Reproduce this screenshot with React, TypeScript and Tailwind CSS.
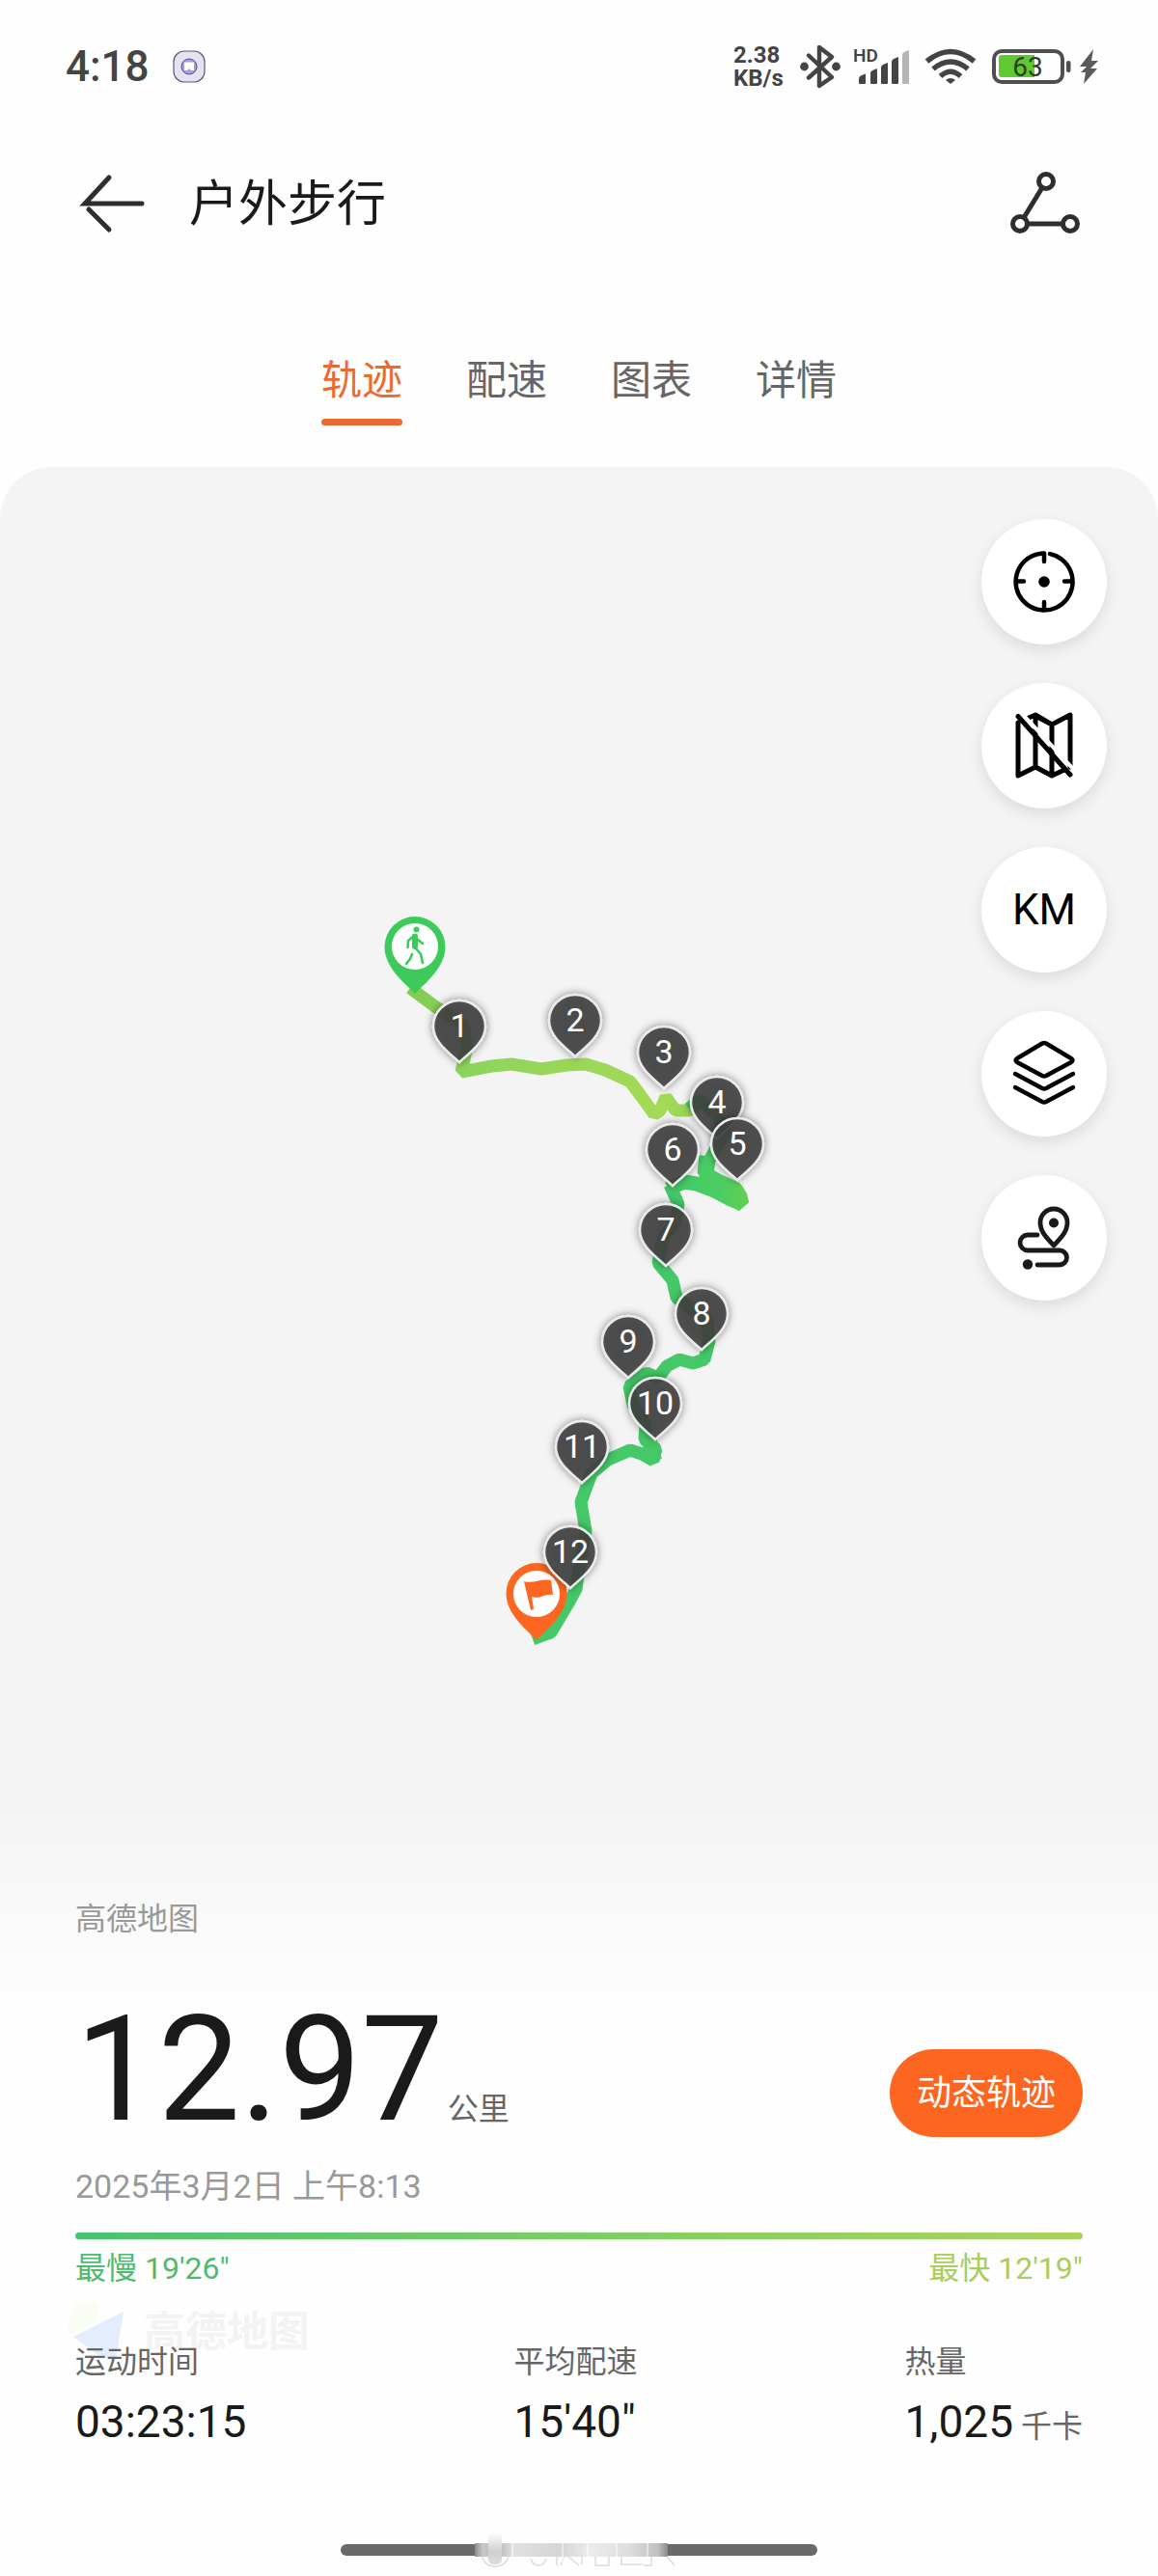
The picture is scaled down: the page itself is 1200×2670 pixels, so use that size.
import React from 'react';

const TABS = ['轨迹', '配速', '图表', '详情'];

// Pins are listed in drawing order, x/y is the tip of the pin
const KM_PINS = [
  { km: 1, x: 476, y: 1101 },
  { km: 2, x: 596, y: 1095 },
  { km: 3, x: 688, y: 1128 },
  { km: 4, x: 743, y: 1180 },
  { km: 5, x: 764, y: 1223 },
  { km: 6, x: 697, y: 1229 },
  { km: 7, x: 690, y: 1312 },
  { km: 8, x: 727, y: 1399 },
  { km: 9, x: 651, y: 1428 },
  { km: 10, x: 679, y: 1492 },
  { km: 11, x: 603, y: 1537 },
  { km: 12, x: 591, y: 1646 },
];

const StatusBar: React.FC = () => {
  return (
    <div className="flex items-center justify-between h-[138px] pl-[68px] pr-[60px] text-[#444]">
      <div className="flex items-center gap-6">
        <span className="text-[44px] leading-[48px] font-medium">4:18</span>
        <svg className="w-[34px] h-[34px]" viewBox="0 0 34 34">
          <rect x="1" y="1" width="32" height="32" rx="11" fill="#e6e2f0" stroke="#5d5578" strokeWidth="1.2" />
          <circle cx="17" cy="17" r="8" fill="#a99be0" stroke="#5b4a9c" strokeWidth="1" />
          <path d="M12 12.500h10v8.500h-3l-2-2-2 2h-3z" fill="#fff" />
        </svg>
      </div>

      <div className="flex items-center">
        <div className="w-[60px] mr-[9px] text-[24px] leading-[24px] font-bold">
          <div>2.38</div>
          <div>KB/s</div>
        </div>
        <svg className="w-[42px] h-[46px] mr-[13px]" viewBox="0 0 42 46" fill="none" stroke="currentColor" strokeWidth="4.4" strokeLinejoin="round" strokeLinecap="round">
          <path d="M9 11.5 33 34 20 43V3L33 13 9 34.500" />
          <circle cx="4.500" cy="23" r="2.200" />
          <circle cx="37.500" cy="23" r="2.200" />
        </svg>
        <svg className="w-[60px] h-[52px] mr-[14px]" viewBox="0 -6 60 52">
          <text x="0" y="15" fontSize="19" fontWeight="600" fill="currentColor">HD</text>
          <g fill="currentColor">
            <path d="M6 33q0-3 3-4l4-1.500V37q0 1-1 1H7q-1 0-1-1z" />
            <path d="M18 27q0-2 2-3l5-2v15q0 1-1 1h-5q-1 0-1-1z" />
            <path d="M29 21q0-2 2-3l5-2v21q0 1-1 1h-5q-1 0-1-1z" />
            <path d="M40 15q0-2 2-3l5-2v27q0 1-1 1h-5q-1 0-1-1z" />
          </g>
          <path d="M51 8q0-2 2-3l5-2v34q0 1-1 1h-5q-1 0-1-1z" fill="#b5b5b5" />
        </svg>
        <svg className="w-[54px] h-[40px] mr-4" viewBox="0 0 54 40" fill="none" stroke="currentColor" strokeWidth="5.500">
          <path d="M2.500 14.500Q27-5.500 51.500 14.500" />
          <path d="M9 22.500Q27 7.500 45 22.500" />
          <path d="M16.500 30Q27 20.500 37.500 30" />
          <path d="M22 34q5-4 10 0l-5 4z" fill="currentColor" stroke="none" />
        </svg>
        <svg className="w-[82px] h-[36px] mr-2" viewBox="0 0 82 36">
          <rect x="2" y="2" width="71" height="32" rx="8" fill="none" stroke="#4f4f4f" strokeWidth="4" />
          <path d="M10 6h34v23H10q-3 0-3-3V9q0-3 3-3z" fill="#60c831" />
          <rect x="77" y="12" width="4.500" height="12" rx="2" fill="#4f4f4f" />
          <text x="37" y="28" textAnchor="middle" fontSize="28" fill="#2d4022">63</text>
        </svg>
        <svg className="w-[22px] h-[38px]" viewBox="0 0 22 38">
          <path d="M15 1 1 19h7L2 25h5L5 37 19 21h-7l8-8h-7z" fill="#5a5a5a" />
        </svg>
      </div>
    </div>
  );
};

const Header: React.FC = () => {
  return (
    <header className="flex items-center h-[148px] pl-[82px] pr-20 text-[#2e2e2e]">
      <button type="button" aria-label="返回">
        <svg className="w-[70px] h-[64px]" viewBox="0 0 70 64" fill="none" stroke="currentColor" strokeWidth="5" strokeLinecap="round">
          <path d="M31 4 6 31h59M10 37l21 21" />
        </svg>
      </button>
      <h1 className="ml-11 text-[51px] leading-[60px] font-normal text-[#1a1a1a]">户外步行</h1>
      <button type="button" aria-label="分享" className="ml-auto">
        <svg className="w-[76px] h-[68px]" viewBox="0 0 76 68" fill="none" stroke="currentColor" strokeWidth="5">
          <circle cx="40" cy="10" r="7.500" />
          <circle cx="13" cy="54" r="7.500" />
          <circle cx="65" cy="54" r="7.500" />
          <path d="M36 16.500 17 47.500M20.500 54h37" />
        </svg>
      </button>
    </header>
  );
};

const KmPin: React.FC<{ km: number; x: number; y: number }> = ({ km, x, y }) => {
  return (
    <g transform={`translate(${x} ${y})`}>
      <path
        d="M0 0C-8-8-27-20-27-37A27 27 0 0 1 27-37C27-20 8-8 0 0Z"
        fill="#404040"
        fillOpacity="0.86"
        stroke="#ebebeb"
        strokeWidth="2.500"
        filter="url(#pin-shadow)"
      />
      <text x="0" y="-26" textAnchor="middle" fontSize="34" fill="#fff">{km}</text>
    </g>
  );
};

const RouteMap: React.FC = () => {
  return (
    <svg className="block w-full h-auto" viewBox="0 484 1200 1388" role="img" aria-label="步行轨迹">
      <defs>
        <linearGradient id="first-leg" gradientUnits="userSpaceOnUse" x1="430" y1="0" x2="715" y2="0">
          <stop offset="0" stopColor="#85cc55" />
          <stop offset="0.2" stopColor="#8dd45c" />
          <stop offset="0.9" stopColor="#a5da55" />
          <stop offset="1" stopColor="#98d555" />
        </linearGradient>
        <linearGradient id="loop-leg" gradientUnits="userSpaceOnUse" x1="700" y1="0" x2="775" y2="0">
          <stop offset="0" stopColor="#44ca68" />
          <stop offset="0.6" stopColor="#4bcd63" />
          <stop offset="1" stopColor="#62cf55" />
        </linearGradient>
        <filter id="pin-shadow" x="-30%" y="-30%" width="160%" height="160%">
          <feDropShadow dx="0" dy="0" stdDeviation="4" floodColor="#000" floodOpacity="0.5" />
        </filter>
      </defs>

      <g fill="none" strokeWidth="13" strokeLinejoin="bevel">
        <path
          d="M425 1024 452 1044 480 1062 484 1085 478 1111 510 1105 530 1103 561 1108 587 1104 607 1103 627 1109 653 1121 665 1137 678 1155 684 1151 690 1137 700 1151 714 1151 722 1145"
          stroke="url(#first-leg)"
        />
        <path d="M714 1149 725 1140 743 1156 752 1174 742 1190 735 1203 733 1216" stroke="#45ca66" />
        <path d="M732 1198 730 1216 744 1224 762 1232 767 1240 769 1248 755 1242 740 1234 722 1227 709 1225 692 1232" stroke="url(#loop-leg)" strokeWidth="15" />
        <path
          d="M694 1228 703 1248 700 1267 687 1283 682 1309 697 1327 701 1345 713 1354 733 1370 735 1390 730 1409 718 1413 704 1409 691 1416 682 1428 670 1423 652 1437 656 1456 669 1477 668 1492 680 1502 677 1514 665 1507 653 1503 630 1513 613 1527 602 1557 607 1587 600 1626 597 1647 590 1660 571 1692 552 1699"
          stroke="#45c868"
        />
        <path d="M672 1490 678 1514" stroke="#45c868" strokeWidth="16" />
      </g>

      {/* Start */}
      <g transform="translate(430 1030)">
        <path d="M0 0C-8-9-31.500-26-31.500-48.500A31.500 31.500 0 0 1 31.500-48.500C31.500-26 8-9 0 0Z" fill="#3ccb5b" />
        <circle cx="0" cy="-49" r="24" fill="#fff" />
        <g fill="none" stroke="#3ccb5b" strokeLinecap="round" strokeLinejoin="round">
          <circle cx="1.500" cy="-66.500" r="3" fill="#3ccb5b" stroke="none" />
          <path d="M0-59.500V-49" strokeWidth="6" />
          <path d="M-1-60-7-55-7.500-48M3-56l5 4M0-48l6 7 2 9M-3-41l-2 5-4 5" strokeWidth="2.600" />
        </g>
      </g>

      {/* Finish */}
      <g transform="translate(556 1700)">
        <path d="M0 0C-8-9-31.500-26-31.500-48.500A31.500 31.500 0 0 1 31.500-48.500C31.500-26 8-9 0 0Z" fill="#fc6621" />
        <circle cx="0" cy="-48" r="24" fill="#fff" />
        <path d="M-13-61c9 3 16-3 28-1l2 15c-9-2-14 5-22 2l2 13-3 1z" fill="#fc6621" />
      </g>

      {KM_PINS.map((pin) => (
        <KmPin key={pin.km} {...pin} />
      ))}
    </svg>
  );
};

const MapButton: React.FC<{ label: string; children: React.ReactNode }> = ({ label, children }) => {
  return (
    <button
      type="button"
      aria-label={label}
      className="flex items-center justify-center w-[130px] h-[130px] rounded-full bg-white text-black shadow-[0_6px_16px_rgba(0,0,0,0.10)]"
    >
      {children}
    </button>
  );
};

const MapControls: React.FC = () => {
  return (
    <div className="absolute top-[54px] right-[53px] flex flex-col gap-10">
      <MapButton label="定位">
        <svg className="w-[68px] h-[68px]" viewBox="0 0 68 68" fill="none" stroke="currentColor" strokeWidth="4.500" strokeLinecap="round">
          <path d="M34 4.500A29.500 29.500 0 1 0 40 5.100" />
          <path d="M34 5v8M34 55v8M5 33.500h8M55 33.500h8" />
          <circle cx="34" cy="34" r="5.800" fill="currentColor" stroke="none" />
        </svg>
      </MapButton>
      <MapButton label="隐藏地图">
        <svg className="w-[68px] h-[72px]" viewBox="0 0 68 72" fill="none" stroke="currentColor" strokeWidth="5" strokeLinejoin="round" strokeLinecap="round">
          <path d="M7 12v55l18-9 17 9 13-6M25 58V5l17 9v53M18 7l7-3 17 10 19-10v54" />
          <path d="M11 2.500 66 62" stroke="#fff" strokeWidth="4" />
          <path d="M7 5.500 61 66" />
        </svg>
      </MapButton>
      <MapButton label="公里标记">
        <span className="text-[44px] leading-[48px]">KM</span>
      </MapButton>
      <MapButton label="图层">
        <svg className="w-[68px] h-[72px]" viewBox="0 0 68 72" fill="none" stroke="currentColor" strokeWidth="4.400" strokeLinejoin="round" strokeLinecap="round">
          <path d="M32 4.500q2-1 4 0L62 20q3 2 0 4L36 38q-2 1-4 0L6 24q-3-2 0-4z" />
          <path d="M4 36 32 51q2 1 4 0L64 36M4 50l28 15q2 1 4 0L64 50" />
        </svg>
      </MapButton>
      <MapButton label="路线">
        <svg className="w-[60px] h-[68px]" viewBox="0 0 60 68" fill="none" stroke="#1a1a1a" strokeWidth="4.800" strokeLinecap="round">
          <path d="M40 42C34 35 26 29 26 18a14 14 0 0 1 28 0C54 29 46 35 40 42Z" strokeLinejoin="round" />
          <circle cx="40" cy="18.500" r="5" fill="#1a1a1a" stroke="none" />
          <path d="M23 31H13a8 8 0 0 0 0 16H46a7.500 7.500 0 0 1 0 15H23" />
          <circle cx="13" cy="61.500" r="5.200" fill="#1a1a1a" stroke="none" />
        </svg>
      </MapButton>
    </div>
  );
};

const Stat: React.FC<{ label: string; value: string; unit?: string }> = ({ label, value, unit }) => {
  return (
    <div>
      <dt className="text-[32px] leading-[48px] text-[#666]">{label}</dt>
      <dd className="mt-2 flex items-baseline gap-2 text-[46px] leading-[60px] text-[#1a1a1a]">
        {value}
        {unit && <span className="text-[32px] text-[#666]">{unit}</span>}
      </dd>
    </div>
  );
};

const Summary: React.FC = () => {
  return (
    <section className="px-[78px] pt-[93px] bg-linear-to-b from-[#f4f4f4] to-[#fefefe] to-[210px]">
      <p className="text-[32px] leading-[48px] text-[#999]">高德地图</p>

      <div className="mt-[53px] flex items-end justify-between">
        <p className="flex items-baseline gap-1 text-[#1a1a1a]">
          <span className="text-[152px] leading-[158px]">12.97</span>
          <span className="text-[32px] leading-[48px] text-[#666]">公里</span>
        </p>
        <button type="button" className="mb-[9px] w-[200px] h-[91px] rounded-full bg-[#fc6621] text-white text-[36px] leading-[48px]">
          动态轨迹
        </button>
      </div>

      <p className="mt-[18px] text-[34px] leading-[48px] text-[#999]">2025年3月2日 上午8:13</p>

      <div className="mt-6 h-[7px] rounded-full bg-linear-to-r from-[#48c26e] via-[#78cf61] to-[#abd35c]"></div>
      <div className="mt-[6px] flex justify-between text-[32px] leading-[48px]">
        <span className="text-[#4fbb6e]">最慢 19'26"</span>
        <span className="text-[#a9cd60]">最快 12'19"</span>
      </div>

      <div className="relative mt-[49px]">
        {/* Map provider mark sits under the stats */}
        <div className="absolute -top-[38px] -left-[8px] flex items-center gap-[17px]" aria-hidden="true">
          <svg className="w-[62px] h-[62px]" viewBox="0 0 62 62">
            <path d="M0 34Q0 2 14 0h18v20z" fill="#f9fdf4" />
            <path d="M6 36 58 10 50 60 30 54z" fill="#e3edfd" />
          </svg>
          <span className="text-[43px] leading-[60px] font-bold text-[#f3f3f3]">高德地图</span>
        </div>
        <dl className="relative flex justify-between">
          <Stat label="运动时间" value="03:23:15" />
          <Stat label="平均配速" value={'15\'40"'} />
          <Stat label="热量" value="1,025" unit="千卡" />
        </dl>
      </div>
    </section>
  );
};

const HomeIndicator: React.FC = () => {
  return (
    <div className="flex justify-center pt-[77px]">
      <svg className="w-[494px] h-[51px]" viewBox="0 0 494 51">
        <defs>
          <linearGradient id="smear">
            <stop offset="0" stopColor="#8a8a8a" />
            <stop offset="0.04" stopColor="#c8c8c8" />
            <stop offset="0.12" stopColor="#b8b8b8" />
            <stop offset="0.2" stopColor="#e0e0e0" />
            <stop offset="0.45" stopColor="#d6d6d6" />
            <stop offset="0.6" stopColor="#ececec" />
            <stop offset="0.8" stopColor="#dedede" />
            <stop offset="0.95" stopColor="#c0c0c0" />
            <stop offset="1" stopColor="#8a8a8a" />
          </linearGradient>
          <linearGradient id="ghost" x1="0" y1="0" x2="0" y2="1">
            <stop offset="0" stopColor="#fefefe" />
            <stop offset="0.6" stopColor="#cfcfcf" />
            <stop offset="1" stopColor="#dedede" />
          </linearGradient>
        </defs>
        <rect x="0" y="15" width="494" height="12" rx="6" fill="#6a6a6a" />
        <rect x="139" y="14" width="200" height="14" fill="url(#smear)" />
        <rect x="153" y="3" width="14" height="33" rx="5" fill="url(#ghost)" />
        <g fill="none" stroke="#dcdcdc" strokeWidth="1.500">
          <path d="M147 28q2 10 13 10t14-10M197 30q2 7 8 7t8-7M224 28v9M232 26l-4 11M236 28l11 9M250 26v10M264 28v9h14v-9M291 26v10h22M322 28v9h-8M338 28l8 9" />
        </g>
        <g stroke="#fff" strokeWidth="2" opacity="0.5">
          <path d="M178 12v20M230 12v22M256 12v22M286 12v22M318 12v20" />
        </g>
      </svg>
    </div>
  );
};

const App: React.FC = () => {
  return (
    <main className="min-h-screen bg-[#fefefe] font-[Roboto,'Noto_Sans_CJK_SC',sans-serif]">
      <StatusBar />
      <Header />

      <nav className="flex justify-center gap-[66px] pt-[79px] pb-[43px]">
        {TABS.map((tab, index) => (
          <a key={tab} href="#" className={index === 0 ? 'text-[#eb6a32]' : 'text-[#666]'}>
            <span className="block text-[42px] leading-[60px]">{tab}</span>
            {index === 0 && <span className="block mt-[9px] h-[7px] rounded-full bg-[#eb6a32]"></span>}
          </a>
        ))}
      </nav>

      <section className="relative rounded-t-[54px] bg-[#f4f4f4]">
        <RouteMap />
        <MapControls />
      </section>

      <Summary />
      <HomeIndicator />
    </main>
  );
};

export default App;
